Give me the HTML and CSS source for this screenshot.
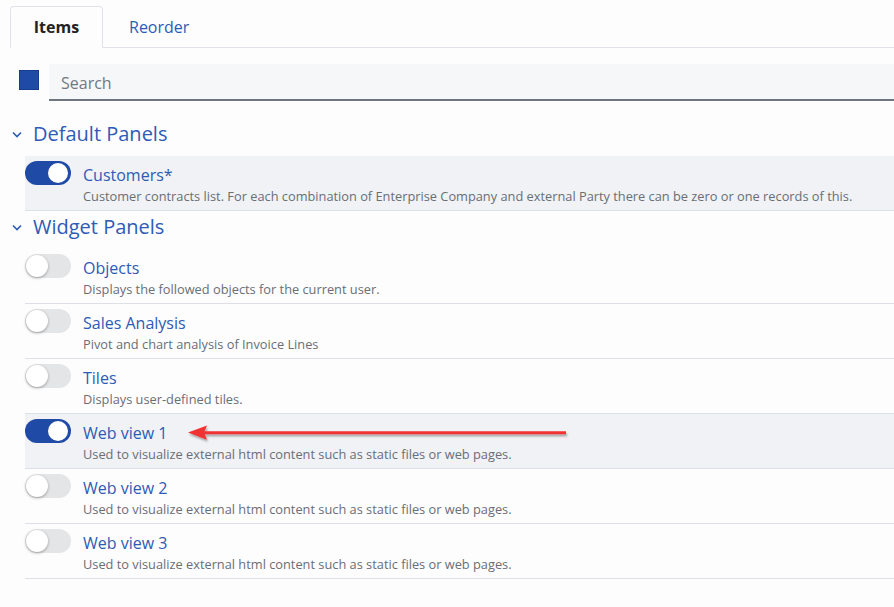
FILE: index.html
```html
<!DOCTYPE html>
<html>
<head>
<meta charset="utf-8">
<link rel="stylesheet" href="styles.css">
</head>
<body>
<div class="page">
  <div class="tabs">
    <div class="tab active">Items</div>
    <div class="tab">Reorder</div>
  </div>
  <div class="search-row">
    <span class="check"></span>
    <div class="search">Search</div>
  </div>

  <div class="section-head">
    <svg class="chev" width="10" height="7" viewBox="0 0 10 7"><path d="M1 1.5 L5 5.5 L9 1.5" fill="none" stroke="#2d5bb5" stroke-width="1.6"/></svg>
    <span>Default Panels</span>
  </div>
  <div class="list">
    <div class="row selected">
      <span class="toggle on"><span class="knob"></span></span>
      <div class="text">
        <div class="title">Customers*</div>
        <div class="desc">Customer contracts list. For each combination of Enterprise Company and external Party there can be zero or one records of this.</div>
      </div>
    </div>
  </div>

  <div class="section-head second">
    <svg class="chev" width="10" height="7" viewBox="0 0 10 7"><path d="M1 1.5 L5 5.5 L9 1.5" fill="none" stroke="#2d5bb5" stroke-width="1.6"/></svg>
    <span>Widget Panels</span>
  </div>
  <div class="list">
    <div class="row">
      <span class="toggle"><span class="knob"></span></span>
      <div class="text">
        <div class="title">Objects</div>
        <div class="desc">Displays the followed objects for the current user.</div>
      </div>
    </div>
    <div class="row">
      <span class="toggle"><span class="knob"></span></span>
      <div class="text">
        <div class="title">Sales Analysis</div>
        <div class="desc">Pivot and chart analysis of Invoice Lines</div>
      </div>
    </div>
    <div class="row">
      <span class="toggle"><span class="knob"></span></span>
      <div class="text">
        <div class="title">Tiles</div>
        <div class="desc">Displays user-defined tiles.</div>
      </div>
    </div>
    <div class="row selected arrow-host">
      <span class="toggle on"><span class="knob"></span></span>
      <div class="text">
        <div class="title">Web view 1</div>
        <div class="desc">Used to visualize external html content such as static files or web pages.</div>
      </div>
      <svg class="arrow" width="400" height="24" viewBox="0 0 400 24">
        <defs>
          <filter id="sh" x="-5%" y="-50%" width="110%" height="200%">
            <feDropShadow dx="1" dy="2" stdDeviation="1.2" flood-color="#000" flood-opacity="0.35"/>
          </filter>
        </defs>
        <g filter="url(#sh)">
          <path d="M18 10.3 L380 10.3 L380 13.2 L18 13.2 Z" fill="#f03232"/>
          <path d="M2 11.6 L21 4.5 L18 11.6 L21 18.8 Z" fill="#f03232"/>
        </g>
      </svg>
    </div>
    <div class="row">
      <span class="toggle"><span class="knob"></span></span>
      <div class="text">
        <div class="title">Web view 2</div>
        <div class="desc">Used to visualize external html content such as static files or web pages.</div>
      </div>
    </div>
    <div class="row">
      <span class="toggle"><span class="knob"></span></span>
      <div class="text">
        <div class="title">Web view 3</div>
        <div class="desc">Used to visualize external html content such as static files or web pages.</div>
      </div>
    </div>
  </div>
</div>
</body>
</html>
```

FILE: styles.css
```css
html, body {
  margin: 0;
  padding: 0;
  background: #fdfdfe;
  font-family: "Open Sans", "Noto Sans", sans-serif;
}
.page {
  width: 894px;
  height: 607px;
  overflow: hidden;
}
.tabs {
  display: flex;
  margin: 6px 0 0 10px;
  border-bottom: 1px solid #dfe2e8;
  height: 41px;
}
.tab {
  font-size: 16px;
  color: #2d5bb5;
  line-height: 42px;
  padding: 0 0 0 26px;
}
.tab.active {
  box-sizing: border-box;
  width: 93px;
  height: 42px;
  line-height: 40px;
  padding: 0;
  text-align: center;
  color: #222;
  font-weight: 700;
  background: #fdfdfe;
  border: 1px solid #dfe2e8;
  border-bottom-color: #fdfdfe;
  border-radius: 4px 4px 0 0;
}
.search-row {
  display: flex;
  align-items: center;
  margin-top: 16px;
}
.check {
  width: 18px;
  height: 18px;
  margin: -6px 0 0 19px;
  background: #1f4aa6;
  border: 1px solid #163c8c;
  box-sizing: content-box;
}
.search {
  flex: 1;
  margin-left: 10px;
  height: 35px;
  line-height: 38px;
  background: #f6f7f8;
  border-bottom: 2px solid #6e757e;
  padding-left: 12px;
  font-size: 16px;
  color: #737880;
}
.section-head {
  display: flex;
  align-items: center;
  margin: 20px 0 11px 0;
  height: 24px;
  font-size: 20px;
  color: #2d5bb5;
}
.section-head.second {
  margin-top: 3px;
}
.chev {
  margin: 2px 11px 0 12px;
}
.list {
  margin-left: 25px;
}
.row {
  position: relative;
  display: flex;
  align-items: flex-start;
  height: 54px;
  border-bottom: 1px solid #dde0e6;
}
.row.selected {
  background: #f0f2f5;
}
.toggle {
  position: relative;
  width: 46px;
  height: 24px;
  margin-top: 5px;
  border-radius: 12px;
  background: #e4e5e7;
  flex: none;
}
.toggle .knob {
  position: absolute;
  left: 1px;
  top: 1px;
  width: 22px;
  height: 22px;
  border-radius: 50%;
  background: #fff;
  box-shadow: 0 1px 3px rgba(0,0,0,0.35);
}
.toggle.on {
  background: #1f4aa6;
}
.toggle.on .knob {
  left: 23px;
  top: 2px;
  width: 20px;
  height: 20px;
  box-shadow: none;
}
.text {
  margin-left: 12px;
  padding-top: 8px;
}
.title {
  font-size: 16px;
  line-height: 22px;
  color: #2d5bb5;
}
.desc {
  font-size: 12.8px;
  line-height: 21px;
  color: #6a6e75;
}
.arrow {
  position: absolute;
  left: 161px;
  top: 7px;
}
```
